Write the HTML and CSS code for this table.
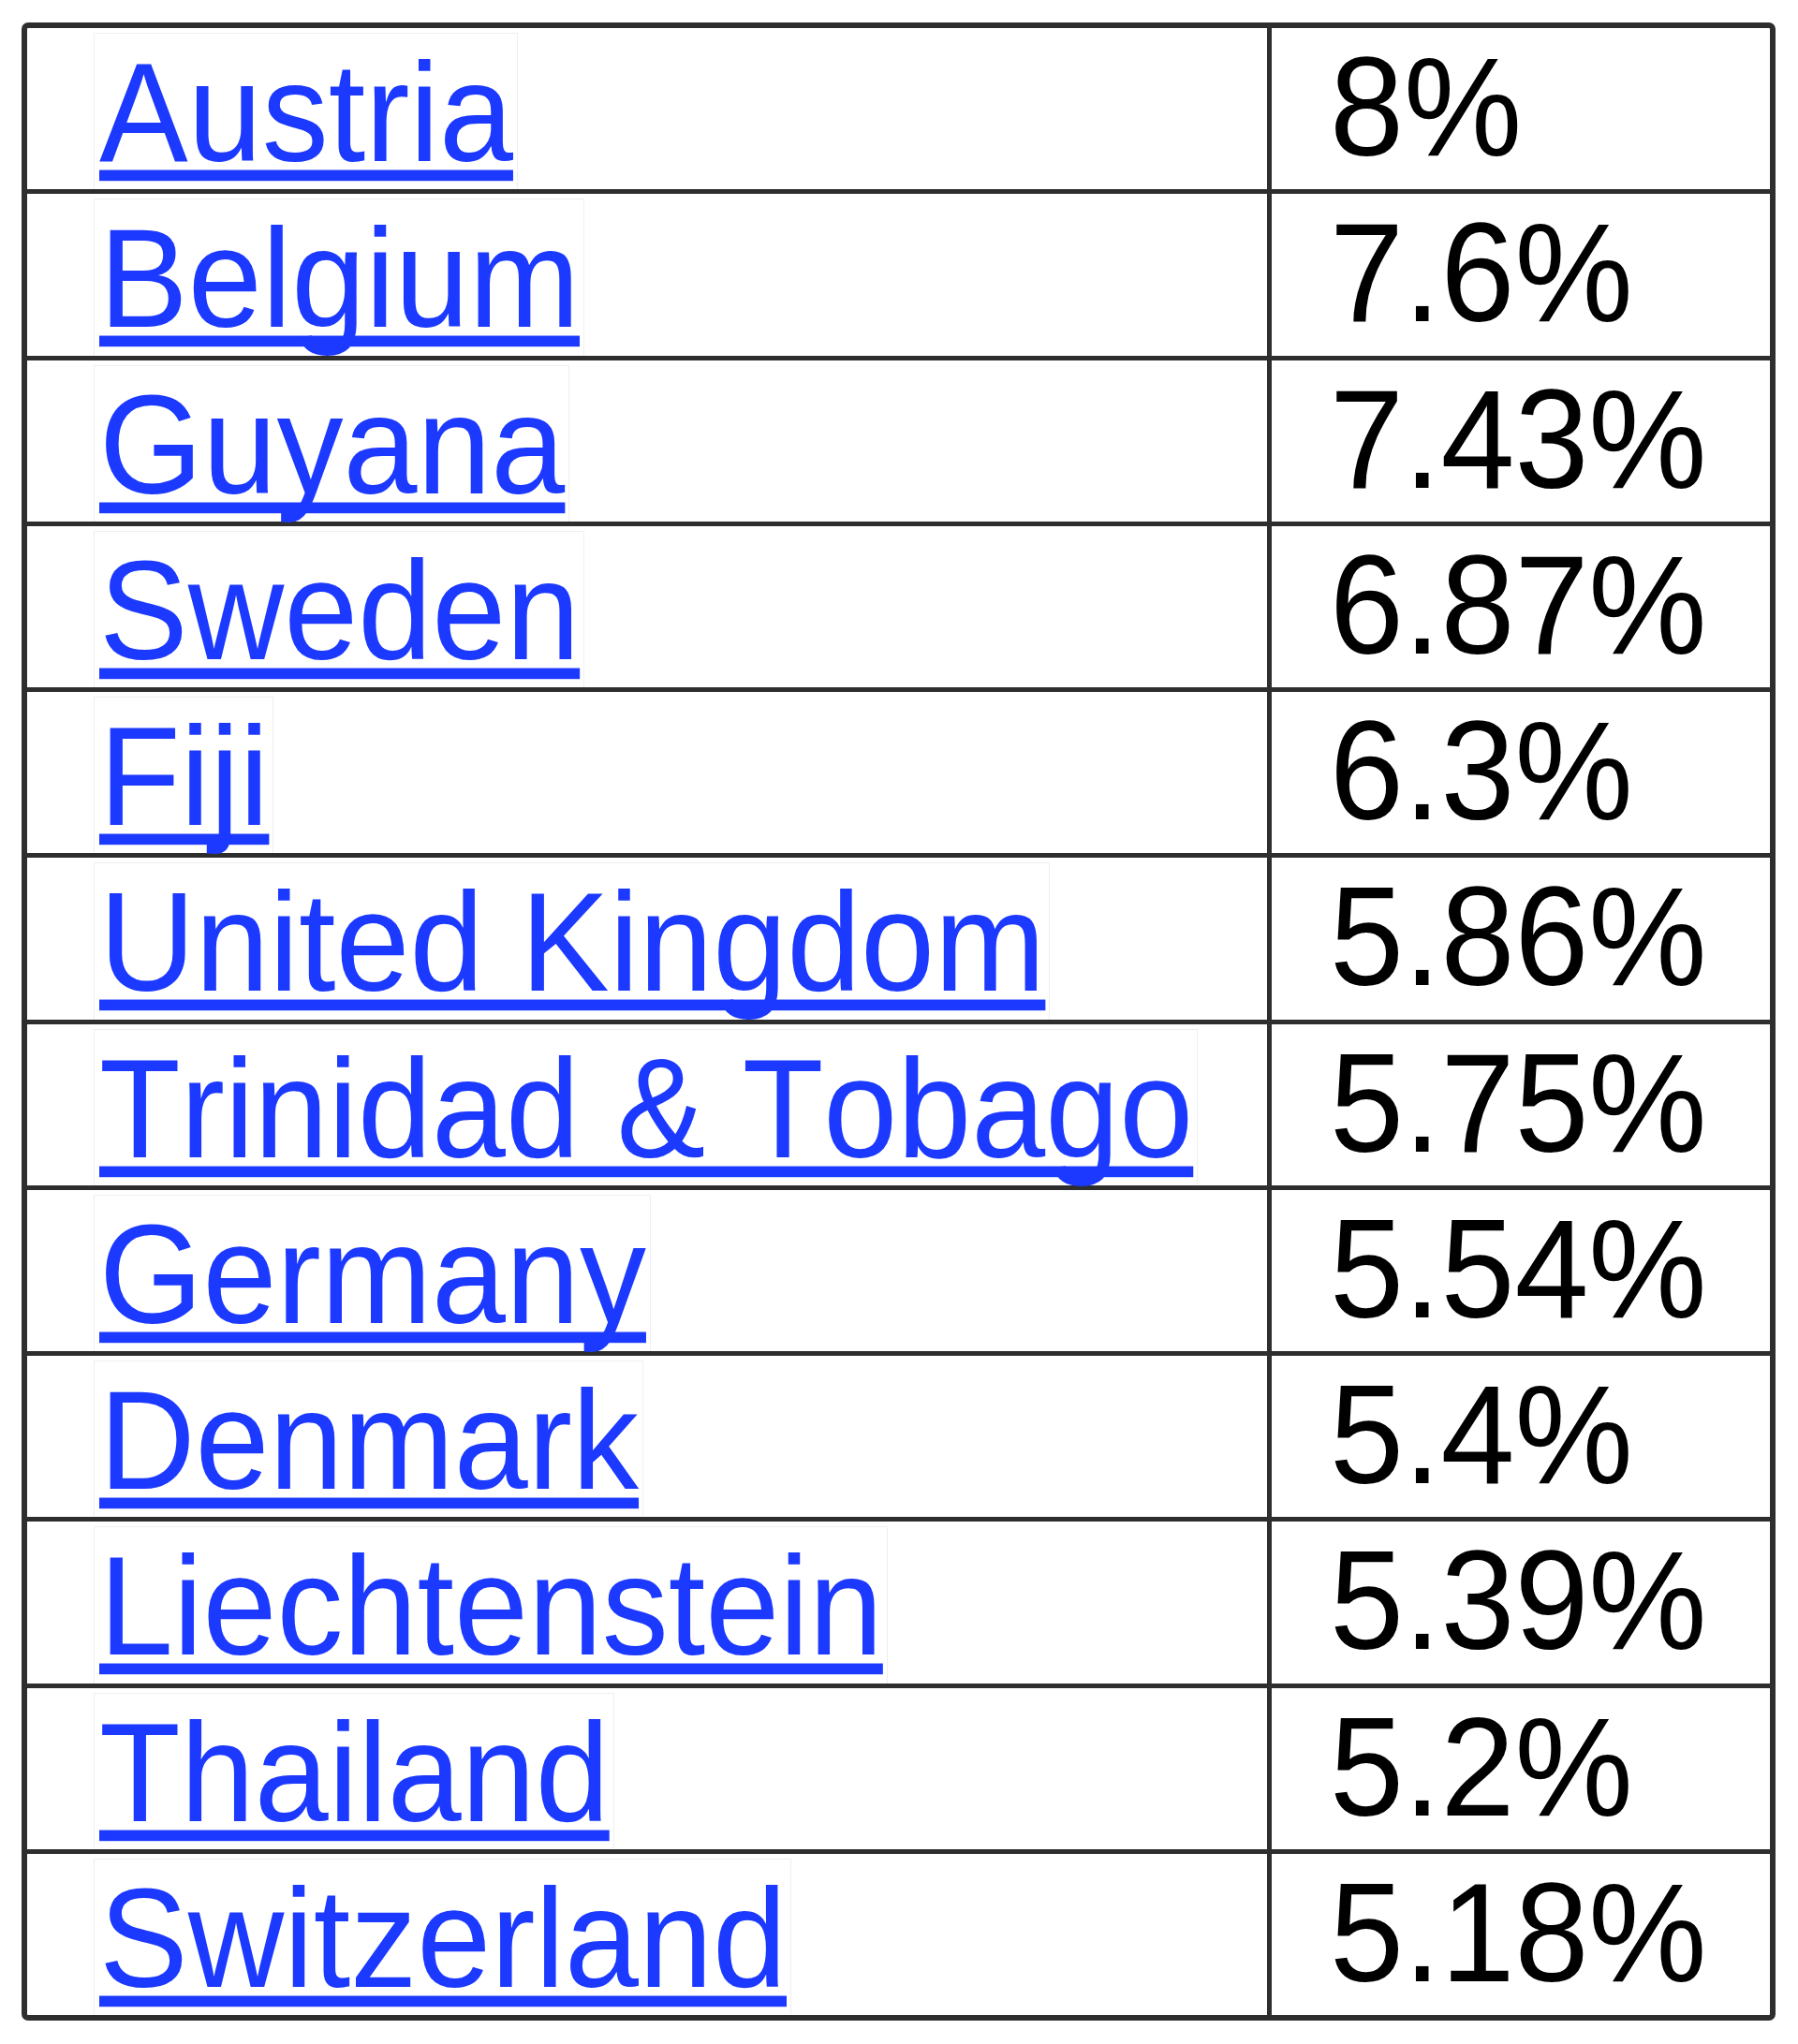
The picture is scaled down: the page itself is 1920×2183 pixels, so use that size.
FILE: index.html
```html
<!DOCTYPE html>
<html lang="en">
<head>
<meta charset="utf-8">
<title>Country rates</title>
<link rel="stylesheet" href="styles.css">
</head>
<body>
<div class="table">
  <div class="cell name"><a class="link" href="#"><span class="txt">Austria</span></a></div>
  <div class="cell val"><span class="txt">8%</span></div>
  <div class="cell name"><a class="link" href="#"><span class="txt">Belgium</span></a></div>
  <div class="cell val"><span class="txt">7.6%</span></div>
  <div class="cell name"><a class="link" href="#"><span class="txt">Guyana</span></a></div>
  <div class="cell val"><span class="txt">7.43%</span></div>
  <div class="cell name"><a class="link" href="#"><span class="txt">Sweden</span></a></div>
  <div class="cell val"><span class="txt">6.87%</span></div>
  <div class="cell name"><a class="link" href="#"><span class="txt">Fiji</span></a></div>
  <div class="cell val"><span class="txt">6.3%</span></div>
  <div class="cell name"><a class="link" href="#"><span class="txt">United Kingdom</span></a></div>
  <div class="cell val"><span class="txt">5.86%</span></div>
  <div class="cell name"><a class="link" href="#"><span class="txt">Trinidad &amp; Tobago</span></a></div>
  <div class="cell val"><span class="txt">5.75%</span></div>
  <div class="cell name"><a class="link" href="#"><span class="txt">Germany</span></a></div>
  <div class="cell val"><span class="txt">5.54%</span></div>
  <div class="cell name"><a class="link" href="#"><span class="txt">Denmark</span></a></div>
  <div class="cell val"><span class="txt">5.4%</span></div>
  <div class="cell name"><a class="link" href="#"><span class="txt">Liechtenstein</span></a></div>
  <div class="cell val"><span class="txt">5.39%</span></div>
  <div class="cell name"><a class="link" href="#"><span class="txt">Thailand</span></a></div>
  <div class="cell val"><span class="txt">5.2%</span></div>
  <div class="cell name"><a class="link" href="#"><span class="txt">Switzerland</span></a></div>
  <div class="cell val"><span class="txt">5.18%</span></div>
</div>
</body>
</html>
```
FILE: styles.css
```css
html, body {
  margin: 0;
  padding: 0;
  background: #ffffff;
}

body {
  font-family: "Liberation Sans", Arial, sans-serif;
}

.table {
  display: grid;
  grid-template-columns: 1324px 532px;
  grid-auto-rows: 172.25px;
  gap: 5px;
  width: max-content;
  margin: 24px 0 0 23px;
  background: #2e2e2e;
  border: 6px solid #2e2e2e;
  border-radius: 7px;
  overflow: hidden;
}

.cell {
  background: #ffffff;
  display: flex;
  align-items: flex-start;
}

.name {
  padding-left: 71px;
}

.val {
  padding-left: 62px;
  padding-top: 16px;
}

.link {
  display: flex;
  align-items: flex-start;
  align-self: stretch;
  margin-top: 5px;
  padding: 16px 4px 0 5px;
  border: 1px solid #eceff4;
  border-bottom: 0;
  color: #1c39ff;
  text-decoration: none;
}

.txt {
  display: inline-block;
  font-family: "Liberation Sans", Arial, sans-serif;
  font-size: 142px;
  line-height: 142px;
  font-kerning: none;
  white-space: nowrap;
  color: #000000;
  transform: scaleY(1.06);
  transform-origin: 0 120px;
}

.link .txt {
  color: #1c39ff;
  text-decoration: underline;
  text-decoration-thickness: 11px;
  text-underline-offset: 9px;
  text-decoration-skip-ink: none;
}
```
